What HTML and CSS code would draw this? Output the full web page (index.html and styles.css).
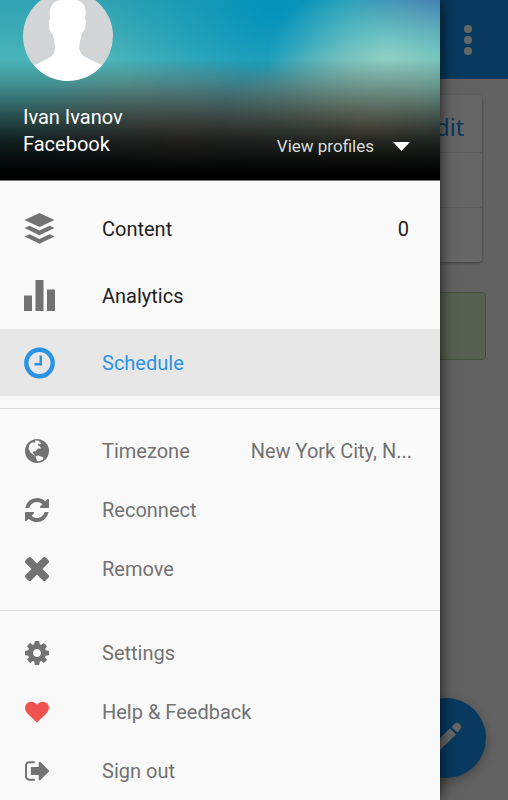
FILE: index.html
```html
<!DOCTYPE html>
<html lang="en">
<head>
<meta charset="utf-8">
<meta name="viewport" content="width=device-width, initial-scale=1">
<title>Schedule</title>
<link rel="stylesheet" href="styles.css">
</head>
<body>
<div class="app">
  <div class="page">
    <header class="toolbar">
      <button class="more" aria-label="More options">
        <svg width="8" height="30" viewBox="0 0 8 30"><circle cx="4" cy="4" r="4"/><circle cx="4" cy="15" r="4"/><circle cx="4" cy="26" r="4"/></svg>
      </button>
    </header>
    <main class="content">
      <section class="card">
        <div class="card-head"><a class="edit" href="#">Edit</a></div>
        <div class="card-row"></div>
        <div class="card-row"></div>
      </section>
      <div class="notice"></div>
    </main>
    <button class="fab" aria-label="Edit schedule">
      <svg width="32" height="32" viewBox="0 0 32 32"><path d="M0 32 2 24 20 6.500 26 12.500 8 30ZM21.500 5 25 1.500Q27 0 29 1.500L30.500 3Q32 5 30.500 7L27.500 10.500Z"/></svg>
    </button>
  </div>
  <div class="scrim"></div>
  <aside class="drawer">
    <div class="profile">
      <svg class="avatar" viewBox="0 0 90 90" aria-hidden="true">
        <defs>
          <clipPath id="round"><circle cx="45" cy="45" r="45"/></clipPath>
          <filter id="soft"><feGaussianBlur stdDeviation="0.7"/></filter>
        </defs>
        <g clip-path="url(#round)">
          <rect width="90" height="90" fill="#d1d5d8"/>
          <path filter="url(#soft)" fill="#fff" d="M27 28C25 14 31 8 45 8S65 14 62 28Q64 30 62 35Q62 40 59 42Q57 50 56 55Q56 62 62 66L79 74 90 95H0L12 74 26 67Q32 64 32 57Q32 49 29 42Q26 40 26 34Q25 30 27 28Z"/>
        </g>
      </svg>
      <div class="account">
        <div class="identity">
          <div>Ivan Ivanov</div>
          <div>Facebook</div>
        </div>
        <button class="profiles">View profiles
          <svg width="17" height="9" viewBox="0 0 17 9"><path d="M0 0H17L8.500 9Z"/></svg>
        </button>
      </div>
    </div>
    <nav>
      <ul class="menu menu-main">
        <li><a href="#">
          <svg class="icon" viewBox="0 0 32 32"><path d="M15.500 0 30.500 7 15.500 14 0.500 7ZM0.500 15 5.500 12.800 15.500 17.500 25.500 12.800 30.500 15 15.500 22.200ZM0.500 23.500 5.500 21.200 15.500 25.900 25.500 21.200 30.500 23.500 15.500 30.800Z"/></svg>
          <span class="label">Content</span><span class="count">0</span></a></li>
        <li><a href="#">
          <svg class="icon" viewBox="0 0 32 32"><path d="M0 15.500H8V31H0ZM11.500 0H19.500V31H11.500ZM23 9.500H31V31H23Z"/></svg>
          <span class="label">Analytics</span></a></li>
        <li><a class="active" href="#" aria-current="page">
          <svg class="icon" viewBox="0 0 32 32"><circle cx="15.500" cy="16" r="13.200" fill="none" stroke="currentColor" stroke-width="4.400"/><path d="M15.500 8.500H18V18.500H10.500V16H15.500Z"/></svg>
          <span class="label">Schedule</span></a></li>
      </ul>
      <ul class="menu">
        <li><a href="#">
          <svg class="icon" viewBox="0 0 24 24"><circle cx="12" cy="12" r="12"/><path fill="#f9f9f9" d="M10 1.500 14 1.700 15 3.500 16.500 4 15 5.500 13.500 4.500 12.500 6 15 7.500 16 9.500 13 9.500 10.500 12.500 9 12 7.500 13.500 9 15 10 17 8.500 16 5.500 13.500 3.500 9.500 4.500 5.500 7 3.500 10.500 3.500ZM10.500 17 13.500 16.500 18.500 18.500 18 20.500 14 22.300 12 22Z"/></svg>
          <span class="label">Timezone</span><span class="zone">New York City, N...</span></a></li>
        <li><a href="#">
          <svg class="icon" viewBox="0 0 1536 1536"><path d="M1511 928q0 5-1 7-64 268-268 434.500t-478 166.500q-146 0-282.500-55t-243.500-157l-129 129q-19 19-45 19t-45-19-19-45v-448q0-26 19-45t45-19h448q26 0 45 19t19 45-19 45l-137 137q71 66 161 102t187 36q134 0 250-65t186-179q11-17 53-117 8-23 30-23h192q13 0 22.500 9.500t9.500 22.500zm25-800v448q0 26-19 45t-45 19h-448q-26 0-45-19t-19-45 19-45l138-138q-148-137-349-137-134 0-250 65t-186 179q-11 17-53 117-8 23-30 23h-199q-13 0-22.500-9.500t-9.500-22.500v-7q65-268 270-434.500t480-166.500q146 0 284 55.500t245 156.500l130-129q19-19 45-19t45 19 19 45z"/></svg>
          <span class="label">Reconnect</span></a></li>
        <li><a href="#">
          <svg class="icon" viewBox="302 366 1188 1188"><path d="M1490 1322q0 40-28 68l-136 136q-28 28-68 28t-68-28l-294-294-294 294q-28 28-68 28t-68-28l-136-136q-28-28-28-68t28-68l294-294-294-294q-28-28-28-68t28-68l136-136q28-28 68-28t68 28l294 294 294-294q28-28 68-28t68 28l136 136q28 28 28 68t-28 68l-294 294 294 294q28 28 28 68z"/></svg>
          <span class="label">Remove</span></a></li>
      </ul>
      <ul class="menu">
        <li><a href="#">
          <svg class="icon" viewBox="128 128 1536 1536"><path d="M1152 896q0-106-75-181t-181-75-181 75-75 181 75 181 181 75 181-75 75-181zm512-109v222q0 12-8 23t-20 13l-185 28q-19 54-39 91 35 50 107 138 10 12 10 25t-9 23q-27 37-99 108t-94 71q-12 0-26-9l-138-108q-44 23-91 38-16 136-29 186-7 28-36 28h-222q-14 0-24.500-8.500t-11.500-21.500l-28-184q-49-16-90-37l-141 107q-10 9-25 9-14 0-25-11-126-114-165-168-7-10-7-23 0-12 8-23 15-21 51-66.500t54-70.500q-27-50-41-99l-183-27q-13-2-21-12.500t-8-23.500v-222q0-12 8-23t19-13l186-28q14-46 39-92-40-57-107-138-10-12-10-24 0-10 9-23 26-36 98.500-107.500t94.500-71.500q13 0 26 10l138 107q44-23 91-38 16-136 29-186 7-28 36-28h222q14 0 24.500 8.500t11.500 21.500l28 184q49 16 90 37l142-107q9-9 24-9 13 0 25 10 129 119 165 170 7 8 7 22 0 12-8 23-15 21-51 66.500t-54 70.500q26 50 41 98l183 28q13 2 21 12.500t8 23.500z"/></svg>
          <span class="label">Settings</span></a></li>
        <li><a href="#">
          <svg class="icon heart" viewBox="0 0 1792 1792"><path d="M896 1664q-26 0-44-18l-624-602q-10-8-27.500-26t-55.500-65.500-68-97.500-53.500-121-23.500-138q0-220 127-344t351-124q62 0 126.500 21.500t120 58 95.500 68.500 76 68q36-36 76-68t95.500-68.500 120-58 126.500-21.500q224 0 351 124t127 344q0 221-229 450l-623 600q-18 18-44 18z"/></svg>
          <span class="label">Help &amp; Feedback</span></a></li>
        <li><a href="#">
          <svg class="icon" viewBox="64 112 1568 1568"><path d="M704 1440q0 4 1 20t.5 26.500-3 23.500-10 19.500-20.500 6.500h-320q-119 0-203.500-84.500t-84.500-203.500v-704q0-119 84.500-203.500t203.500-84.500h320q13 0 22.500 9.500t9.500 22.500q0 4 1 20t.5 26.500-3 23.500-10 19.500-20.500 6.500h-320q-66 0-113 47t-47 113v704q0 66 47 113t113 47h312l11.500 1 11.500 3 8 5.500 7 9 2 13.500zm928-544q0 26-19 45l-544 544q-19 19-45 19t-45-19-19-45v-288h-448q-26 0-45-19t-19-45v-384q0-26 19-45t45-19h448v-288q0-26 19-45t45-19 45 19l544 544q19 19 19 45z"/></svg>
          <span class="label">Sign out</span></a></li>
      </ul>
    </nav>
  </aside>
</div>
</body>
</html>
```

FILE: styles.css
```css
* { box-sizing: border-box; }

body {
  margin: 0;
  font-family: Roboto, "Liberation Sans", sans-serif;
  font-size: 20px;
  color: #212121;
}

button {
  border: 0;
  padding: 0;
  background: none;
  font: inherit;
  color: inherit;
}

a { color: inherit; text-decoration: none; }

svg { display: block; fill: currentColor; flex: none; }

.app {
  position: relative;
  min-height: 100vh;
  overflow: hidden;
}

/* Screen behind the drawer */
.page {
  position: absolute;
  inset: 0;
  background: #f5f5f5;
}

.toolbar {
  display: flex;
  justify-content: flex-end;
  align-items: center;
  height: 79px;
  padding-right: 36px;
  background: #168eea;
}

.more { color: #fff; }

.content { padding: 16px 22px; }

.card {
  margin-right: 4px;
  border-radius: 4px;
  background: #fff;
  box-shadow: 0 1px 3px rgba(0, 0, 0, 0.4);
}

.card-head {
  display: flex;
  justify-content: flex-end;
  align-items: center;
  height: 57px;
  padding: 6px 18px 0 0;
}

.edit {
  font-family: "Noto Sans", sans-serif;
  font-size: 23px;
  color: #168eea;
}

.card-row {
  height: 55px;
  border-top: 1px solid #e2e2e2;
}

.notice {
  height: 68px;
  margin-top: 30px;
  border: 1px solid #a3cc94;
  border-radius: 4px;
  background: #d6f0c8;
}

.fab {
  position: absolute;
  right: 22px;
  bottom: 22px;
  display: flex;
  align-items: center;
  justify-content: center;
  width: 80px;
  height: 80px;
  border-radius: 50%;
  background: #168eea;
  color: #fff;
  box-shadow: 0 4px 12px rgba(0, 0, 0, 0.3);
}

.scrim {
  position: absolute;
  inset: 0;
  background: rgba(0, 0, 0, 0.6);
}

/* Navigation drawer */
.drawer {
  position: relative;
  width: calc(100% - 68px);
  max-width: 440px;
  height: 100vh;
  overflow: hidden;
  background: #f9f9f9;
  box-shadow: 0 0 14px rgba(0, 0, 0, 0.8);
}

.profile {
  margin-top: -9px;
  padding: 0 30px 22px 23px;
  border-bottom: 1px solid #777;
  color: #fff;
  background:
    linear-gradient(rgba(0, 0, 0, 0) 36%, rgba(0, 0, 0, 0.38) 58%, rgba(0, 0, 0, 0.8) 80%, #000 97%),
    radial-gradient(ellipse 120px 80px at 88% 36%, rgba(155, 215, 200, 0.8), rgba(155, 215, 200, 0)),
    radial-gradient(ellipse 100px 60px at 100% 0, rgba(60, 100, 175, 0.85), rgba(60, 100, 175, 0)),
    radial-gradient(ellipse 150px 90px at 84% 72%, rgba(205, 185, 150, 0.9), rgba(205, 185, 150, 0)),
    radial-gradient(ellipse 190px 80px at 42% 78%, rgba(165, 150, 135, 0.9), rgba(165, 150, 135, 0)),
    radial-gradient(ellipse 170px 150px at 62% 8%, rgba(0, 145, 188, 0.95), rgba(0, 145, 188, 0)),
    linear-gradient(#2b9fb0, #55bcbc 50%, #487f86);
}

.avatar { width: 90px; height: 90px; }

.account {
  display: flex;
  justify-content: space-between;
  align-items: flex-end;
  margin-top: 23px;
}

.identity { line-height: 27px; }

.profiles {
  display: flex;
  align-items: center;
  gap: 19px;
  font-size: 17px;
  line-height: 24px;
  color: #d8dcda;
}

.profiles svg { color: #fff; }

.menu {
  margin: 0;
  padding: 12px 0;
  list-style: none;
  color: #727272;
}

.menu + .menu { border-top: 1px solid #d8d8d8; }

.menu a {
  display: flex;
  align-items: center;
  height: 59px;
  padding: 0 28px 0 25px;
}

.icon { width: 24px; height: 24px; color: #727272; }

.label { margin-left: 53px; }

.zone, .count { margin-left: auto; }

.heart { color: #ef5350; }

.menu-main { padding-top: 14px; color: #212121; }

.menu-main a { height: 67px; padding: 0 31px 0 24px; }

.menu-main .icon { width: 32px; height: 32px; }

.menu-main .label { margin-left: 46px; }

.menu-main .active { background: #e7e7e7; }

.active, .active .icon { color: #2a93e3; }
```
